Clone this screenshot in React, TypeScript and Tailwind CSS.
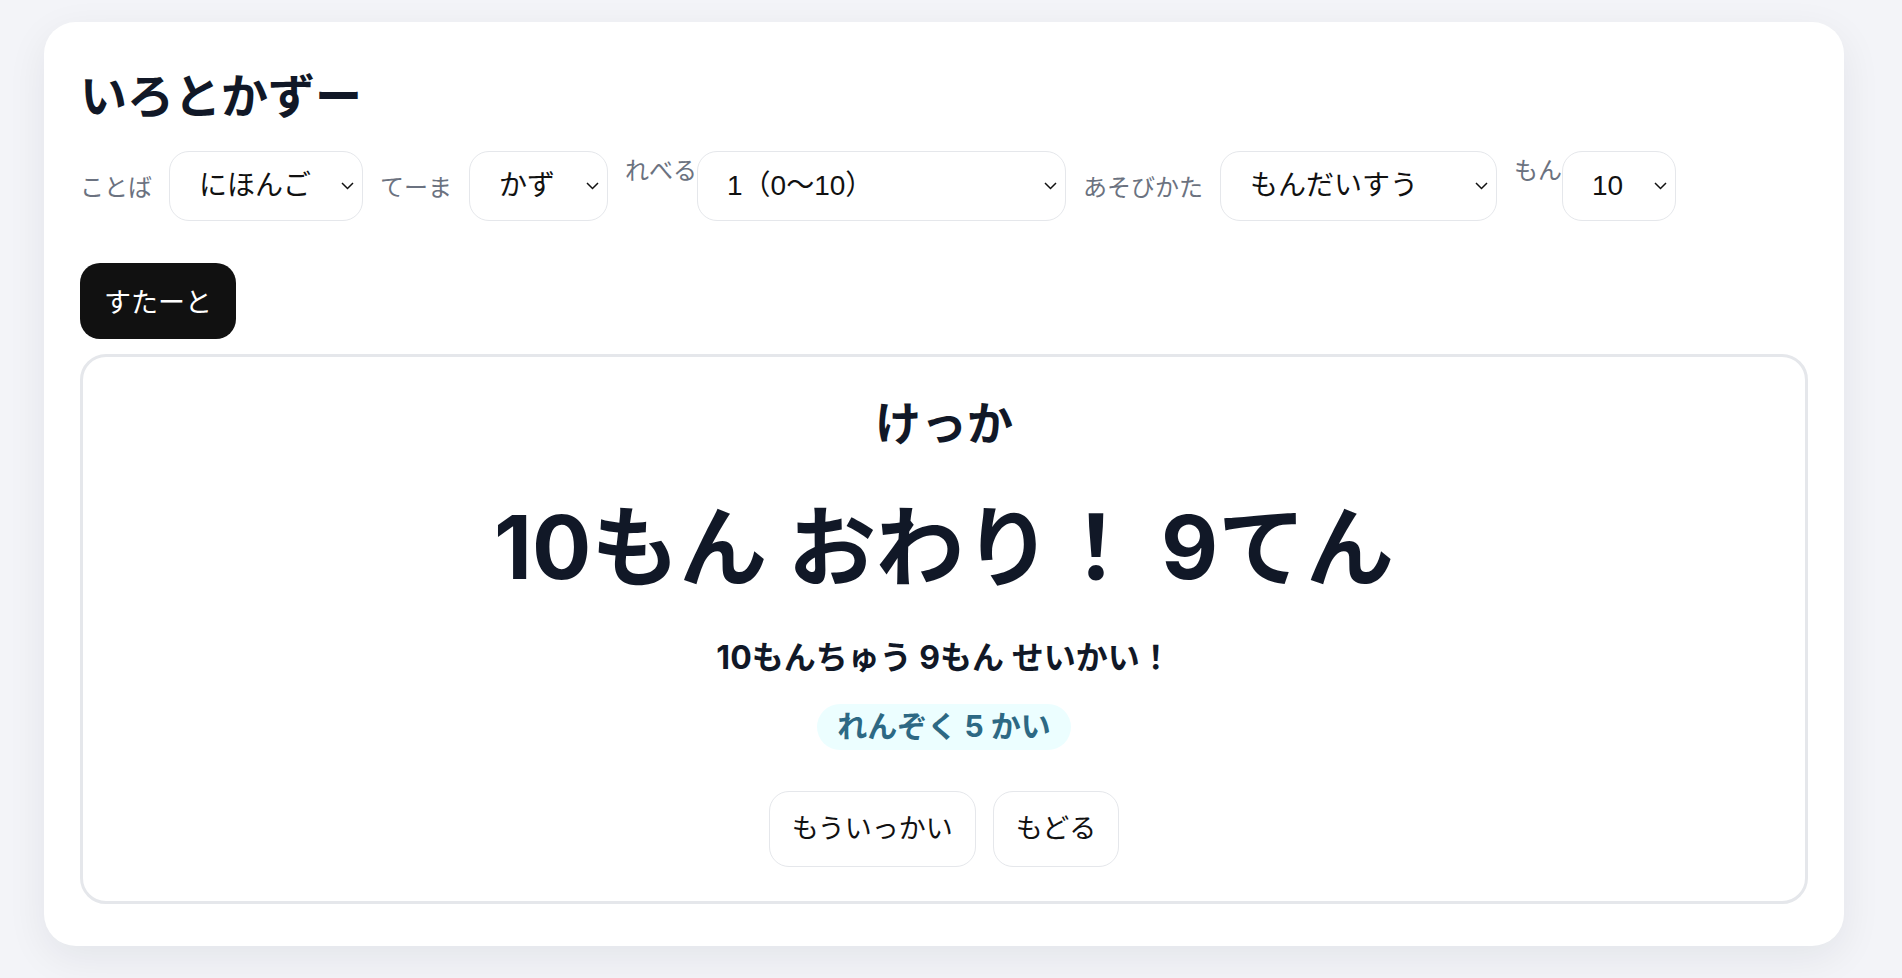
const FONT = '"Noto Sans CJK JP", "Noto Sans", sans-serif'
const MIXED_FONT = 'Inter, "Noto Sans CJK JP", sans-serif'
const SELECT_FONT = '"Liberation Sans", "Noto Sans CJK JP", sans-serif'

function Chevron() {
  return (
    <svg
      width="13"
      height="8"
      viewBox="0 0 13 8"
      className="pointer-events-none absolute right-[9px] top-1/2 -translate-y-1/2"
    >
      <polyline points="1,1 6.5,6.5 12,1" fill="none" stroke="#111" strokeWidth="1.5" />
    </svg>
  )
}

function Select({ value, width }: { value: string; width: string }) {
  return (
    <div className="relative">
      <select
        defaultValue={value}
        className={`h-[70px] appearance-none rounded-[20px] border-[1.5px] border-[#e5e7eb] bg-white pl-[29px] text-[28px] leading-[1.5] text-[#111] outline-none ${width}`}
        style={{ fontFamily: SELECT_FONT }}
      >
        <option value={value}>{value}</option>
      </select>
      <Chevron />
    </div>
  )
}

function Label({ children }: { children: string }) {
  return <span className="text-[24px] leading-[1.5] text-[#6b7280]">{children}</span>
}

export default function App() {
  return (
    <div
      className="min-h-screen bg-[#f3f4f8] pl-[44px] pt-[22px] pb-[29px]"
      style={{ fontFamily: FONT }}
    >
      <main className="w-[1800px] rounded-[32px] bg-white px-[36px] pt-[36px] pb-[42px] shadow-[0_12px_40px_rgba(17,24,39,0.07)]">
        <h1 className="text-[47px] font-bold leading-[1.5] text-[#111827]">いろとかずー</h1>

        {/* Settings */}
        <div className="mt-[22px] flex items-center gap-[17px]">
          <Label>ことば</Label>
          <Select value="にほんご" width="w-[194px]" />
          <Label>てーま</Label>
          <Select value="かず" width="w-[139px]" />
          <div className="flex items-start self-start">
            <Label>れべる</Label>
            <Select value="1（0〜10）" width="w-[369px]" />
          </div>
          <Label>あそびかた</Label>
          <Select value="もんだいすう" width="w-[277px]" />
          <div className="flex items-start self-start">
            <Label>もん</Label>
            <Select value="10" width="w-[114px]" />
          </div>
        </div>

        <button className="mt-[42px] rounded-[20px] bg-[#111] px-6 py-[18px] text-[27px] leading-[1.5] text-white">
          すたーと
        </button>

        {/* Result */}
        <section
          className="mt-[15px] flex flex-col items-center rounded-[26px] border-[3px] border-[#e5e7eb] pt-[32px] pb-[34px] text-[#111827]"
          style={{ fontFamily: MIXED_FONT }}
        >
          <h2 className="text-[46px] font-bold leading-[1.5]">けっか</h2>
          <p className="mt-[37px] text-[88px] font-bold leading-[1.2]">10もん おわり！ 9てん</p>
          <p className="mt-[33px] text-[32px] font-bold leading-[1.5]">10もんちゅう 9もん せいかい！</p>
          <span className="mt-[22px] flex h-[46px] items-center rounded-full bg-[#ecfeff] px-[20px] text-[30px] font-bold text-[#2d6984]">
            れんぞく 5 かい
          </span>
          <div className="mt-[41px] flex gap-[17px]">
            <button className="rounded-[20px] border-[1.5px] border-[#e5e7eb] bg-white px-[22px] py-[17px] text-[27px] leading-[1.5] text-[#111]">
              もういっかい
            </button>
            <button className="rounded-[20px] border-[1.5px] border-[#e5e7eb] bg-white px-[22px] py-[17px] text-[27px] leading-[1.5] text-[#111]">
              もどる
            </button>
          </div>
        </section>
      </main>
    </div>
  )
}
